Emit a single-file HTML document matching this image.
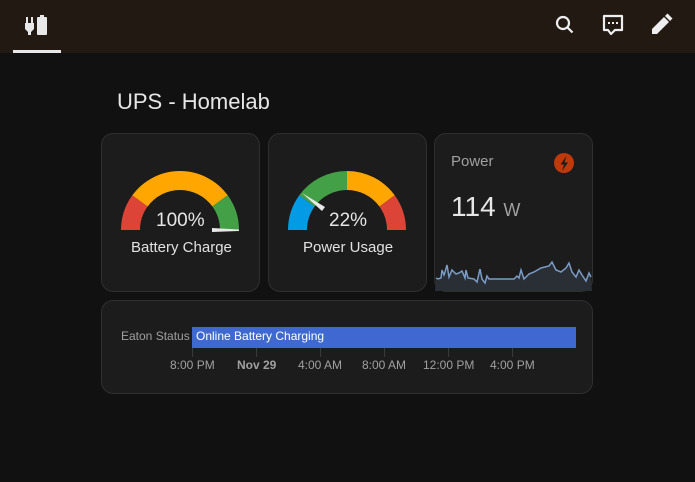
<!DOCTYPE html>
<html><head><meta charset="utf-8"><style>
*{margin:0;padding:0;box-sizing:border-box}
body{width:695px;height:482px;background:#111111;font-family:"Liberation Sans",sans-serif;position:relative;overflow:hidden;color:#e1e1e1}
.hdr{position:absolute;left:0;top:0;width:695px;height:53px;background:#221a12}
.card{position:absolute;background:#1c1c1c;border:1px solid #2f2f2f;border-radius:12px}
.t{position:absolute;white-space:nowrap}
</style></head><body>
<div class="hdr">
<svg width="695" height="53" style="position:absolute;left:0;top:0">
 <g fill="#e8e8e8">
  <rect x="26" y="17" width="2" height="6"/><rect x="31" y="17" width="2" height="6"/>
  <path d="M25 23h9v6l-3 3v3h-3v-3l-3-3z"/>
  <rect x="40" y="15" width="4" height="2"/><rect x="37" y="17" width="10" height="18" rx="1"/>
 </g>
 <rect x="13" y="50" width="48" height="3" fill="#e8e8e8"/>
 <g fill="none" stroke="#eee" stroke-width="2.2">
  <circle cx="563" cy="23" r="6"/><path d="M567.5 27.5l5 5"/>
  <path d="M604 16h18v14h-7l-4 4-3-4h-4z" stroke-linejoin="round"/>
 </g>
 <g fill="#eee"><rect x="608" y="22" width="2" height="2"/><rect x="612" y="22" width="2" height="2"/><rect x="616" y="22" width="2" height="2"/>
  <path d="M652 34l0-5 12-12 5 5-12 12z"/><path d="M665 16l2.5-2.5 5 5-2.5 2.5z"/></g>
</svg>
</div>
<div class="t" style="left:117px;top:89px;font-size:22px;color:#e6e6e6">UPS - Homelab</div>

<div class="card" style="left:101px;top:133px;width:159px;height:159px"></div>
<div class="card" style="left:268px;top:133px;width:159px;height:159px"></div>
<div class="card" style="left:434px;top:133px;width:159px;height:159px;overflow:hidden"></div>
<div class="card" style="left:101px;top:300px;width:492px;height:94px"></div>

<svg width="695" height="482" style="position:absolute;left:0;top:0">
 <path d="M121 230A59 59 0 0 1 132.3 195.3L147.6 206.5A40 40 0 0 0 140 230z" fill="#db4437"/>
 <path d="M132.3 195.3A59 59 0 0 1 227.7 195.3L212.4 206.5A40 40 0 0 0 147.6 206.5z" fill="#ffa600"/>
 <path d="M227.7 195.3A59 59 0 0 1 239 230L220 230A40 40 0 0 0 212.4 206.5z" fill="#43a047"/>
 <path d="M212 228L239 229.5L239 231L212 232z" fill="#e8e8e8"/>
 <path d="M288 230A59 59 0 0 1 299.3 195.3L314.6 206.5A40 40 0 0 0 307 230z" fill="#039be5"/>
 <path d="M299.3 195.3A59 59 0 0 1 347 171L347 190A40 40 0 0 0 314.6 206.5z" fill="#43a047"/>
 <path d="M347 171A59 59 0 0 1 394.7 195.3L379.4 206.5A40 40 0 0 0 347 190z" fill="#ffa600"/>
 <path d="M394.7 195.3A59 59 0 0 1 406 230L387 230A40 40 0 0 0 379.4 206.5z" fill="#db4437"/>
 <path d="M302 193L325 207L322 211z" fill="#e8e8e8"/>
 <circle cx="564" cy="163" r="10" fill="#c0390b"/>
 <path d="M566.5 156l-6 8.5h3.5l-2 6.5 6-8.5h-3.5z" fill="#1c1c1c"/>
 <path d="M435 291L436 278L438 279L441 278L442 270L444 275L445 272L447 265L449 277L452 270L456 274L459 273L462 271L465 278L466 270L468 278L474 279L477 282L480 269L482 279L485 283L487 276L489 279L514 279L517 276L519 278L521 270L524 279L529 274L534 272L541 268L549 266L552 262L556 270L561 272L566 268L569 263L572 272L576 277L579 270L582 275L586 281L589 273L591 277L592 291z" fill="#2a2e35"/>
 <path d="M436 278L438 279L441 278L442 270L444 275L445 272L447 265L449 277L452 270L456 274L459 273L462 271L465 278L466 270L468 278L474 279L477 282L480 269L482 279L485 283L487 276L489 279L514 279L517 276L519 278L521 270L524 279L529 274L534 272L541 268L549 266L552 262L556 270L561 272L566 268L569 263L572 272L576 277L579 270L582 275L586 281L589 273L591 277" fill="none" stroke="#7a9cc6" stroke-width="1.5"/>
 <g stroke="#3a3a3a" stroke-width="1"><path d="M192.5 327v30M256.5 327v30M320.5 327v30M384.5 327v30M448.5 327v30M512.5 327v30"/></g>
 <rect x="192" y="327" width="384" height="21" fill="#3f69d1"/>
</svg>

<div class="t" style="left:156px;top:210px;font-size:19px;color:#e6e6e6">100%</div>
<div class="t" style="left:131px;top:239px;font-size:15px;color:#e1e1e1">Battery Charge</div>
<div class="t" style="left:329px;top:210px;font-size:19px;color:#e6e6e6">22%</div>
<div class="t" style="left:303px;top:239px;font-size:15px;color:#e1e1e1">Power Usage</div>
<div class="t" style="left:451px;top:153px;font-size:15px;color:#a0a0a0">Power</div>
<div class="t" style="left:451px;top:191px;font-size:28px;color:#e6e6e6">114 <span style="font-size:18px;color:#a0a0a0">W</span></div>
<div class="t" style="left:121px;top:329px;font-size:12px;color:#a0a0a0">Eaton Status</div>
<div class="t" style="left:196px;top:329px;font-size:12px;color:#fff">Online Battery Charging</div>
<div style="position:absolute;top:358px;left:0;font-size:12px;color:#a0a0a0">
 <span class="t" style="left:170px">8:00 PM</span>
 <span class="t" style="left:237px;font-weight:bold">Nov 29</span>
 <span class="t" style="left:298px">4:00 AM</span>
 <span class="t" style="left:362px">8:00 AM</span>
 <span class="t" style="left:423px">12:00 PM</span>
 <span class="t" style="left:490px">4:00 PM</span>
</div>
</body></html>
